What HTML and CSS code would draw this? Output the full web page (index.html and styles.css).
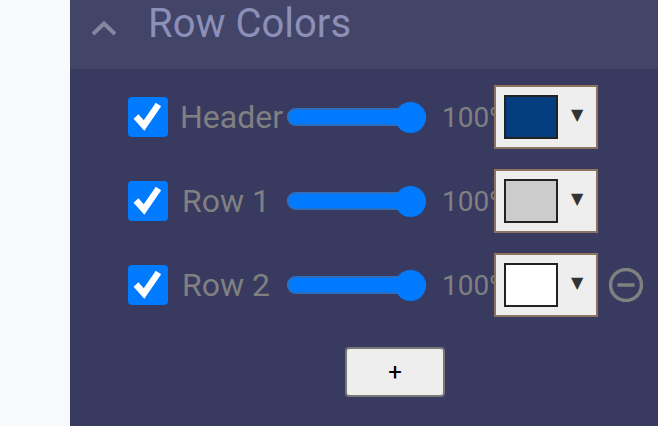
FILE: index.html
```html
<!DOCTYPE html>
<html lang="en">
<head>
  <meta charset="UTF-8">
  <meta name="viewport" content="width=device-width, initial-scale=1.0">
  <title>Row Colors</title>
  <link rel="stylesheet" href="styles.css">
</head>
<body>
  <section class="panel">
    <header class="panel-head">
      <svg class="chevron" width="26" height="16" viewBox="0 0 26 16"><path d="M2 14 L13 3.5 L24 14" fill="none" stroke="currentColor" stroke-width="4"/></svg>
      <h2>Row Colors</h2>
    </header>
    <div class="panel-body">
      <div class="row">
        <span class="check"><svg width="40" height="40" viewBox="0 0 40 40"><path d="M8 19.5 L16 28.5 L30.5 7.5" fill="none" stroke="#fff" stroke-width="6.5"/></svg></span>
        <span class="name name-header">Header</span>
        <input class="slider" type="range" min="0" max="100" value="100">
        <span class="pct">100%</span>
        <button class="picker"><span class="swatch swatch-blue"></span><span class="arrow">▼</span></button>
      </div>
      <div class="row">
        <span class="check"><svg width="40" height="40" viewBox="0 0 40 40"><path d="M8 19.5 L16 28.5 L30.5 7.5" fill="none" stroke="#fff" stroke-width="6.5"/></svg></span>
        <span class="name">Row 1</span>
        <input class="slider" type="range" min="0" max="100" value="100">
        <span class="pct">100%</span>
        <button class="picker"><span class="swatch swatch-grey"></span><span class="arrow">▼</span></button>
      </div>
      <div class="row">
        <span class="check"><svg width="40" height="40" viewBox="0 0 40 40"><path d="M8 19.5 L16 28.5 L30.5 7.5" fill="none" stroke="#fff" stroke-width="6.5"/></svg></span>
        <span class="name">Row 2</span>
        <input class="slider" type="range" min="0" max="100" value="100">
        <span class="pct">100%</span>
        <button class="picker"><span class="swatch swatch-white"></span><span class="arrow">▼</span></button>
        <svg class="remove" width="34" height="34" viewBox="0 0 34 34"><circle cx="17" cy="17" r="15.5" fill="none" stroke="currentColor" stroke-width="3.5"/><path d="M8.5 17 H25.5" stroke="currentColor" stroke-width="3.5"/></svg>
      </div>
      <button class="add">+</button>
    </div>
  </section>
</body>
</html>
```

FILE: styles.css
```css
html, body {
  height: 100%;
}
body {
  margin: 0;
  padding-left: 70px;
  background-color: #f8f9fa;
  font-family: Roboto, sans-serif;
  overflow: hidden;
}
.panel {
  height: 100%;
  background-color: #383a60;
}
.panel-head {
  display: flex;
  align-items: center;
  height: 69px;
  padding: 0 0 0 21px;
  background-color: #424468;
}
.panel-head h2 {
  margin: 0 0 22px 0;
  font-size: 40px;
  font-weight: 400;
  line-height: 46px;
  color: #8c8fb8;
}
.chevron {
  margin: 0 31px 14px 0;
  color: #85879f;
}
.panel-body {
  display: flex;
  flex-direction: column;
  gap: 20px;
  padding: 16px 0 0 58px;
}
.row {
  display: flex;
  align-items: center;
  height: 64px;
  color: #808080;
}
.check {
  flex: none;
  width: 40px;
  height: 40px;
  border-radius: 4px;
  background-color: #007bff;
}
.check svg {
  display: block;
}
.name {
  flex: none;
  width: 105px;
  margin-left: 14px;
  font-size: 32px;
  white-space: nowrap;
}
.name-header {
  width: 107px;
  margin-left: 12px;
}
.slider {
  flex: none;
  appearance: none;
  -webkit-appearance: none;
  width: 139px;
  height: 18px;
  margin: 0;
  border-radius: 9px;
  background-color: #007bff;
  box-shadow: inset 0 0 0 2px #2c6fc0;
}
.slider::-webkit-slider-thumb {
  -webkit-appearance: none;
  width: 31px;
  height: 31px;
  border-radius: 50%;
  background-color: #007bff;
}
.pct {
  flex: none;
  width: 52px;
  margin-left: 16px;
  overflow: hidden;
  font-size: 28px;
  white-space: nowrap;
}
.picker {
  flex: none;
  display: flex;
  align-items: center;
  width: 104px;
  height: 64px;
  padding: 0 0 0 8px;
  border: 2px solid #8c735f;
  background-color: #eeeeee;
}
.swatch {
  width: 54px;
  height: 44px;
  box-sizing: border-box;
  border: 2px solid #222;
}
.swatch-blue { background-color: #043e80; }
.swatch-grey { background-color: #cccccc; }
.swatch-white { background-color: #ffffff; }
.arrow {
  margin: -6px 0 0 13px;
  font-family: "DejaVu Sans", sans-serif;
  font-size: 16px;
  color: #333;
}
.remove {
  flex: none;
  margin-left: 11px;
  color: #808080;
}
.add {
  align-self: flex-start;
  width: 100px;
  height: 50px;
  margin: 10px 0 0 217px;
  border: 2px solid #777;
  border-radius: 4px;
  background-color: #eeeeee;
  font-family: Roboto, sans-serif;
  font-size: 24px;
  color: #000;
}
```
